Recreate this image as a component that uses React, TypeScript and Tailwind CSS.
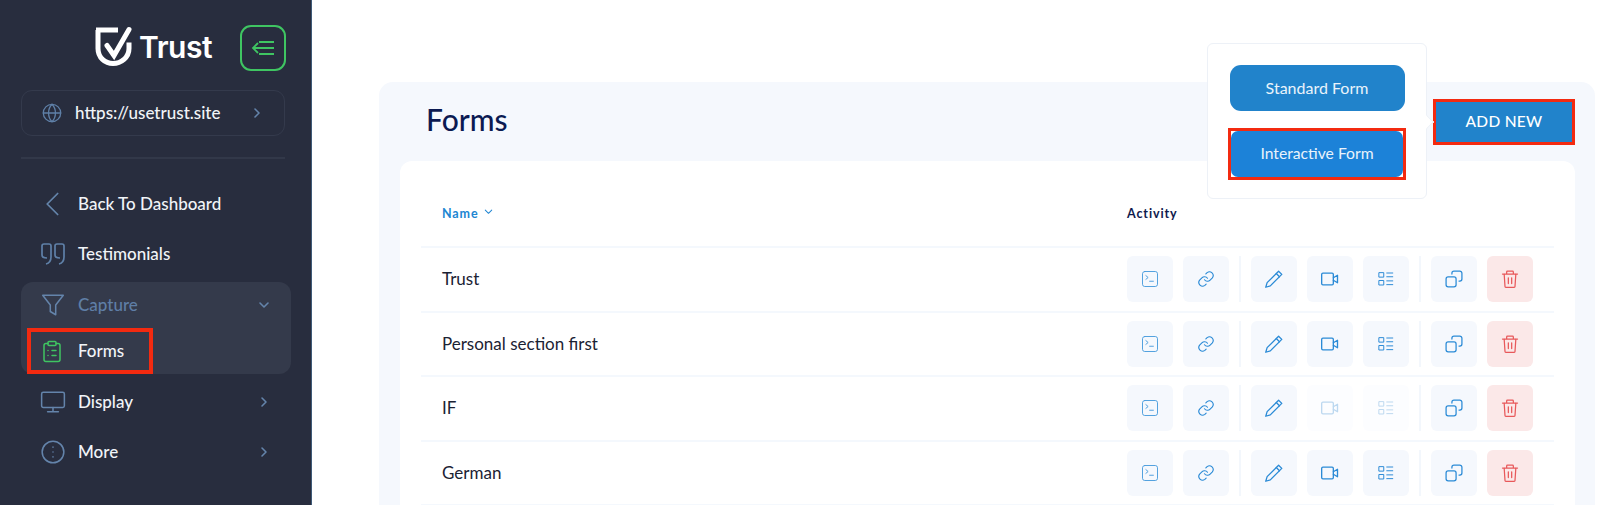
import React from 'react';

const FONT = "font-['Lato','Noto_Sans',sans-serif]";

const Icon: React.FC<{ size?: number; className?: string; sw?: number; children: React.ReactNode }> = ({
  size = 24,
  className,
  sw = 1.5,
  children
}) => (
  <svg
    width={size}
    height={size}
    viewBox="0 0 24 24"
    fill="none"
    stroke="currentColor"
    strokeWidth={sw}
    strokeLinecap="round"
    strokeLinejoin="round"
    className={className}
  >
    {children}
  </svg>
);

const ChevronRight = () => (
  <Icon size={16} sw={2.4} className="text-[#6484ab]">
    <path d="M9 6l6 6-6 6" />
  </Icon>
);

const SideRow: React.FC<{
  icon: React.ReactNode;
  label: string;
  right?: React.ReactNode;
  tall?: boolean;
  muted?: boolean;
}> = ({ icon, label, right, tall = true, muted }) => (
  <div className={`flex items-center pl-[10px] pr-[19px] ${tall ? 'h-[50px]' : 'h-[46px]'}`}>
    <div className="w-[44px] flex justify-center shrink-0">{icon}</div>
    <span className={`ml-[3px] text-[17px] font-medium ${muted ? 'text-[#5f7ea6]' : 'text-[#f1f4f8]'}`}>{label}</span>
    <div className="ml-auto">{right}</div>
  </div>
);

const Sidebar = () => (
  <aside className="w-[312px] h-full shrink-0 bg-[#282d3e] border-r border-[#3f5a78]">
    <div className="flex items-center justify-end pt-[25px] pr-[25px]">
      <svg width="40" height="41" viewBox="0 0 40 40" fill="none" stroke="white" strokeWidth="5" className="-mt-[3px]">
        <path d="M3 3.5H25M5 3.5V22C5 31 12 37 20 37C28 37 36 31 36 22V16" />
        <path d="M14 19L21 29L36 3" strokeLinecap="round" />
      </svg>
      <span className="ml-[6px] -mt-[2px] text-[30px] leading-none font-semibold text-white font-['Inter',sans-serif] tracking-[-0.5px]">Trust</span>
      <button className="ml-[28px] w-[46px] h-[46px] rounded-[11px] border-2 border-[#3fc562] flex items-center justify-center text-[#3fc562]">
        <svg width="24" height="18" viewBox="0 0 24 18" fill="none" stroke="currentColor" strokeWidth="1.8">
          <path d="M8 3H23M2 9H23M8 15H23M7 4L2 9L7 14" />
        </svg>
      </button>
    </div>

    <div className="mt-[19px] ml-[21px] w-[264px] h-[46px] rounded-[11px] border border-[#343a4c] flex items-center pl-[19px] pr-[19px]">
      <Icon size={22} sw={1.4} className="text-[#5f80a8]">
        <circle cx="12" cy="12" r="9.500" />
        <path d="M2.500 12h19M12 2.500c-5 5-5 14 0 19M12 2.500c5 5 5 14 0 19" />
      </Icon>
      <span className="ml-[12px] -mt-[1px] text-[17px] font-medium text-[#f1f4f8]">https://usetrust.site</span>
      <div className="ml-auto">
        <ChevronRight />
      </div>
    </div>

    <div className="mt-[21px] ml-[21px] w-[264px] h-[2px] bg-[#323849]" />

    <div className="mt-[20px] pl-[21px] w-[291px]">
      <SideRow
        label="Back To Dashboard"
        icon={
          <Icon size={28} sw={1.5} className="text-[#6484ab]">
            <path d="M16 3L7 12l9 9" />
          </Icon>
        }
      />
      <SideRow
        label="Testimonials"
        icon={
          <svg width="24" height="22" viewBox="0 0 24 22" fill="none" stroke="#5f80a8" strokeWidth="1.7">
            <path d="M3 1H8C9 1 10 2 10 3V14C10 17 9 20 5 21M3 1C2 1 1 2 1 3V12C1 14 3 15 6 15" />
            <path d="M16 1H21C22 1 23 2 23 3V14C23 17 22 20 18 21M16 1C15 1 14 2 14 3V12C14 14 16 15 19 15" />
          </svg>
        }
      />
      <div className="mt-[3px] h-[92px] rounded-[12px] bg-[#343a4b]">
        <SideRow
          tall={false}
          muted
          label="Capture"
          right={
            <Icon size={16} sw={2.4} className="text-[#6484ab]">
              <path d="M6 9l6 6 6-6" />
            </Icon>
          }
          icon={
            <Icon size={26} sw={1.4} className="text-[#6484ab]">
              <path d="M2.500 3h19l-7 9v9l-5-3v-6z" />
            </Icon>
          }
        />
        <div className="h-[46px] flex items-center">
          <div className="ml-[6px] w-[126px] h-[46px] border-[4px] border-[#f32a10] flex items-center pl-[9px]">
            <div className="w-[24px] flex justify-center">
              <Icon size={25} sw={1.5} className="text-[#3fc562]">
                <path d="M8 4H6a2 2 0 0 0-2 2v14a2 2 0 0 0 2 2h12a2 2 0 0 0 2-2V6a2 2 0 0 0-2-2h-2" />
                <rect x="8" y="2" width="8" height="4" rx="1" />
                <path d="M8 11h.01M8 16h.01M12 11h4M12 16h4" />
              </Icon>
            </div>
            <span className="ml-[14px] text-[17px] font-medium text-[#f1f4f8]">Forms</span>
          </div>
        </div>
      </div>
      <div className="mt-[3px]">
        <SideRow
          label="Display"
          right={<ChevronRight />}
          icon={
            <Icon size={26} sw={1.4} className="text-[#6484ab]">
              <rect x="1.500" y="3" width="21" height="14" rx="1.500" />
              <path d="M12 17v4M7 21h10" />
            </Icon>
          }
        />
        <SideRow
          label="More"
          right={<ChevronRight />}
          icon={
            <Icon size={26} sw={1.4} className="text-[#6484ab]">
              <circle cx="12" cy="12" r="10" />
              <path d="M12 7.500h.01M12 12h.01M12 16.500h.01" />
            </Icon>
          }
        />
      </div>
    </div>
  </aside>
);

const ActionBtn: React.FC<{ danger?: boolean; faded?: boolean; children: React.ReactNode }> = ({ danger, faded, children }) => (
  <div
    className={`w-[46px] h-[46px] rounded-[6px] flex items-center justify-center ${
      danger ? 'bg-[#fbe8e8] text-[#e8585a]' : faded ? 'bg-[#fcfdff] text-[#bcd8f0]' : 'bg-[#f5f8fd] text-[#2a8ad6]'
    }`}
  >
    {children}
  </div>
);

const Sep = () => <div className="w-[2px] h-[46px] bg-[#f3f7fc]" />;

const FormRow: React.FC<{ name: string; faded?: boolean }> = ({ name, faded }) => (
  <div className="h-[64.5px] flex items-center border-b-2 border-[#f4f8fd]">
    <div className="w-[706px] pl-[21px] -mt-[1px] text-[17px] text-[#1b2233]">{name}</div>
    <div className="flex items-center gap-[10px]">
      <ActionBtn>
        <Icon size={18} sw={1.3} className="text-[#4f9fde]">
          <rect x="2" y="2" width="20" height="20" rx="3" />
          <path d="M6.500 7.500l3 2.500-3 2.500M11.500 15h5" />
        </Icon>
      </ActionBtn>
      <ActionBtn>
        <Icon size={18} sw={1.5}>
          <path d="M10 13a5 5 0 0 0 7.500.5l3-3a5 5 0 0 0-7-7l-1.700 1.700" />
          <path d="M14 11a5 5 0 0 0-7.500-.5l-3 3a5 5 0 0 0 7 7l1.700-1.700" />
        </Icon>
      </ActionBtn>
      <Sep />
      <ActionBtn>
        <Icon size={22} sw={1.400}>
          <path d="M17 3.500l3.500 3.500L8 19.500l-5 1.500 1.500-5z" />
          <path d="M14.500 6l3.500 3.500" />
        </Icon>
      </ActionBtn>
      <ActionBtn faded={faded}>
        <Icon size={20} sw={1.600}>
          <rect x="2" y="5" width="14" height="14" rx="1.500" />
          <path d="M16 10.500l5-3v9l-5-3" />
        </Icon>
      </ActionBtn>
      <ActionBtn faded={faded}>
        <Icon size={18} sw={1.300}>
          <rect x="3" y="3.500" width="6" height="6" />
          <rect x="3" y="14" width="6" height="6" />
          <path d="M13 4h8M13 9h8M13 14.500h8M13 19.500h8" />
        </Icon>
      </ActionBtn>
      <Sep />
      <ActionBtn>
        <Icon size={20} sw={1.500}>
          <rect x="2.500" y="9.500" width="12" height="12" rx="2.500" />
          <path d="M9.500 6V5a2.500 2.500 0 0 1 2.500-2.500h7A2.500 2.500 0 0 1 21.500 5v7a2.500 2.500 0 0 1-2.500 2.500h-1" />
        </Icon>
      </ActionBtn>
      <ActionBtn danger>
        <Icon size={20} sw={1.500}>
          <path d="M3 6h18M8 6V3.500a1 1 0 0 1 1-1h6a1 1 0 0 1 1 1V6M5 6l1 15a1 1 0 0 0 1 1h10a1 1 0 0 0 1-1l1-15M10 10.500v7M14 10.500v7" />
        </Icon>
      </ActionBtn>
    </div>
  </div>
);

const rows = [
  { name: 'Trust' },
  { name: 'Personal section first' },
  { name: 'IF', faded: true },
  { name: 'German' }
];

export default function App() {
  return (
    <div className={`w-[1600px] h-[505px] overflow-hidden flex bg-white ${FONT}`}>
      <Sidebar />
      <main className="flex-1 pl-[67px] pr-[5px] pt-[82px]">
        <section className="relative rounded-t-[14px] bg-[#f5f8fd] h-[600px]">
          <div className="h-[79px] flex items-center justify-between pl-[47px] pr-[20px]">
            <h1 className="-mt-[4px] text-[30px] font-medium text-[#0b1a52]">Forms</h1>
            <button className="w-[142px] h-[46px] border-[3px] border-[#f32a10] bg-[#2183cb] text-white text-[15.500px] font-medium tracking-[0.3px]">
              ADD NEW
            </button>
          </div>

          <div className="absolute left-[828px] top-[-39px] w-[220px] h-[156px] rounded-[6px] bg-white border border-[#edf1f7] flex flex-col items-center pt-[21px] z-10">
            <button className="w-[175px] h-[46px] pb-[1px] rounded-[11px] bg-[#2183cb] text-[#eaf3fb] text-[16px]">Standard Form</button>
            <div className="mt-[17px] w-[178px] h-[52px] border-[3px] border-[#f32a10]">
              <button className="w-full h-full rounded-[7px] bg-[#1c82d8] text-[#eaf3fb] text-[15.700px]">Interactive Form</button>
            </div>
            <div className="absolute right-[-6px] top-[73px] w-[10px] h-[10px] rotate-45 bg-white border-t border-r border-[#edf1f7]" />
          </div>

          <div className="ml-[21px] mr-[20px] rounded-t-[12px] bg-white px-[21px]">
            <div className="h-[87px] pt-[21px] flex items-center border-b-2 border-[#f4f8fd] text-[12.500px] font-bold tracking-[0.9px]">
              <div className="w-[706px] pl-[21px] flex items-center gap-[4px] text-[#2086d2]">
                Name
                <Icon size={11} sw={2.200} className="text-[#2086d2] -mt-[5px]">
                  <path d="M5 9l7 7 7-7" />
                </Icon>
              </div>
              <div className="text-[#0f1a4d]">Activity</div>
            </div>
            {rows.map((r) => (
              <FormRow key={r.name} name={r.name} faded={r.faded} />
            ))}
          </div>
        </section>
      </main>
    </div>
  );
}
